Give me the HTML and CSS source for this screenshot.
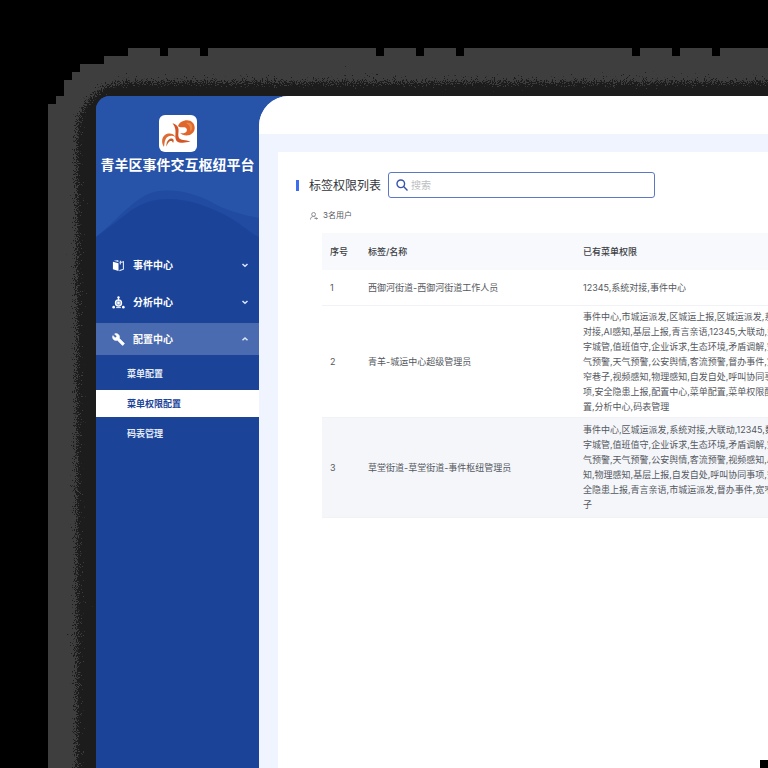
FILE: index.html
```html
<!DOCTYPE html>
<html lang="zh-CN">
<head>
<meta charset="utf-8">
<meta name="viewport" content="width=device-width, initial-scale=1">
<title>青羊区事件交互枢纽平台</title>
<link rel="stylesheet" href="styles.css">
</head>
<body>
<svg class="backdrop" aria-hidden="true">
  <defs>
    <filter id="grain" filterUnits="userSpaceOnUse" x="60" y="64" width="3000" height="3000" color-interpolation-filters="sRGB">
      <feGaussianBlur in="SourceAlpha" stdDeviation="7" result="soft"/>
      <feTurbulence type="fractalNoise" baseFrequency="0.9" numOctaves="2" seed="4"/>
      <feColorMatrix values="0 0 0 0 0  0 0 0 0 0  0 0 0 0 0  1 0 0 0 0" result="noise"/>
      <feComposite in="soft" in2="noise" operator="arithmetic" k2="1.3" k3="1.700" k4="-1"/>
      <feComponentTransfer result="dots"><feFuncA type="linear" slope="12" intercept="-5.5"/></feComponentTransfer>
      <feFlood flood-color="#1c1c1c"/>
      <feComposite in2="dots" operator="in"/>
    </filter>
  </defs>
  <path fill="#3e3e3e" d="M48 3000V104h8V96h8V80h8V72h8V64h24V56h24V48h32v8h8v-8h32v8h8v-8h168v8h8v-8h32v8h8v-8h32v8h8v-8h168v8h8v-8h32v8h8v-8h32v8h8v-8h2280v2952z"/>
  <rect x="77" y="82" width="3100" height="3100" rx="50" filter="url(#grain)"/>
</svg>
<div class="stage">
  <div class="window">
    <aside class="sidebar">
      <svg class="waves" viewBox="0 0 163 60" preserveAspectRatio="none" aria-hidden="true">
        <path fill="#204ba1" d="M0 51C14 41 30 20 50 9c16-8 44-5 67 8 17 9 31 12 46 15v28H0z"/>
        <path fill="#1b4499" d="M0 51C12 42 20 36 33 26c12-9 24-13 39-13 22 0 42 8 61 18 12 7 20 15 30 20v9H0z"/>
      </svg>
      <div class="brand">
        <svg class="logo" viewBox="0 0 38 37" role="img" aria-label="平台标志">
          <rect width="38" height="37" rx="6" fill="#fff"/>
          <path fill="#dc6c34" d="M5 32C1.500 27 3 20 9 18.600c3-.6 6 .4 7.500 3.400-3.500-2-7.500-1.500-9.500 1.500-1.600 2.500-1.500 5.500-2 8.500z"/>
          <path fill="#c85a28" d="M7.500 31.500c-.5-4 1.500-7.500 4.500-8 2.500-.3 3.500 2 2 4.500-.5-2-2-2.500-3.500-1.500s-2.300 3-3 5z"/>
          <path fill="#d35426" d="M13.500 8.300c3 .7 5.500 2.500 6 5.700.4 3-1 6.500.5 9 1.600 2.600 6.500 1.500 11.500 3.600-4 .9-6 1.300-9.500 1.100-5-.3-6-3.700-5.600-7.700.4-4.500.1-8-2.900-11.700z"/>
          <path fill="#e0662c" d="M19 11c1.300-3.500 5-5.700 9-5.700 4.500 0 7.700 3.200 7.700 7.500 0 4.700-3.600 7.700-8.200 7.700-2.700 0-5-1-6.500-2.500 3 .7 5.500.2 6.500-1.500 1.200-2-.2-3.800-2-4.200-2.300-.5-4.500.7-6.500-1.300z"/>
          <path fill="#e88a48" d="M27 8c4-1.200 6.300.9 6.300 4.500 0 2-1 3.300-2.300 4 .8-4-.8-7-4-8.500z"/>
        </svg>
        <h1 class="brand-name">青羊区事件交互枢纽平台</h1>
      </div>
      <nav class="menu">
        <button class="menu-item" type="button">
          <svg class="menu-icon" viewBox="0 0 14 14" aria-hidden="true"><path fill="#fff" d="M1 3l6 1.500v8.500l-6-2z"/><path fill="#c8d6f2" d="M2 2l4-1 1 .5v2z"/><path fill="none" stroke="#dce6fa" stroke-width="1.200" d="M8 4l4.300-1v8L8 12.500M9 2v4"/></svg>
          <span>事件中心</span>
          <svg class="chevron" viewBox="0 0 8 8" aria-hidden="true"><path d="M1.500 3L4 5.300 6.500 3"/></svg>
        </button>
        <button class="menu-item" type="button">
          <svg class="menu-icon" viewBox="0 0 14 14" aria-hidden="true"><circle cx="7" cy="7.500" r="3.300" fill="#8fabe0" stroke="#fff" stroke-width="1.300"/><circle cx="7" cy="7.500" r="1.300" fill="#fff"/><circle cx="7" cy="1.700" r="1.300" fill="#fff"/><circle cx="1.800" cy="12" r="1.400" fill="#fff"/><circle cx="12.200" cy="12" r="1.400" fill="#fff"/><path stroke="#fff" fill="none" d="M7 2v3M4.500 12.500h5"/></svg>
          <span>分析中心</span>
          <svg class="chevron" viewBox="0 0 8 8" aria-hidden="true"><path d="M1.500 3L4 5.300 6.500 3"/></svg>
        </button>
        <button class="menu-item is-open" type="button" aria-expanded="true">
          <svg class="menu-icon" viewBox="0 0 24 24" aria-hidden="true"><path fill="#fff" stroke="#fff" d="M22.700 19l-9.100-9.100c.9-2.300.4-5-1.500-6.900-2-2-5-2.400-7.400-1.300L9 6 6 9 1.600 4.700C.4 7.100.9 10.100 2.900 12.100c1.900 1.900 4.600 2.400 6.900 1.500l9.100 9.100c.4.4 1 .4 1.400 0l2.300-2.300c.5-.4.5-1.100.1-1.400z"/></svg>
          <span>配置中心</span>
          <svg class="chevron" viewBox="0 0 8 8" aria-hidden="true"><path d="M1.500 5.300L4 3l2.500 2.300"/></svg>
        </button>
        <div class="submenu">
          <a href="#">菜单配置</a>
          <a href="#" class="is-current" aria-current="page">菜单权限配置</a>
          <a href="#">码表管理</a>
        </div>
      </nav>
    </aside>
    <main class="main">
      <header class="topbar"></header>
      <section class="panel">
        <div class="panel-head">
          <h2>标签权限列表</h2>
          <label class="search">
            <svg viewBox="0 0 12 12" aria-hidden="true"><circle cx="4.800" cy="4.800" r="3.800"/><path d="M7.600 7.600l3.900 3.900"/></svg>
            <input type="search" placeholder="搜索" aria-label="搜索">
          </label>
        </div>
        <p class="count">
          <svg viewBox="0 0 8 8" aria-hidden="true"><circle cx="3.600" cy="2.400" r="1.900"/><path d="M.5 7.500c0-2 1.300-3 3-3 .8 0 1.500.2 2 .7M4.500 6.500h3M6.500 5.500l1 1-1 1"/></svg>
          3名用户
        </p>
        <table>
          <thead>
            <tr><th class="col-no">序号</th><th class="col-name">标签/名称</th><th>已有菜单权限</th></tr>
          </thead>
          <tbody>
            <tr><td>1</td><td>西御河街道-西御河街道工作人员</td><td>12345,系统对接,事件中心</td></tr>
            <tr class="tall"><td>2</td><td>青羊-城运中心超级管理员</td><td>事件中心,市城运派发,区城运上报,区城运派发,系统<br>对接,AI感知,基层上报,青言亲语,12345,大联动,数<br>字城管,值班值守,企业诉求,生态环境,矛盾调解,空<br>气预警,天气预警,公安舆情,客流预警,督办事件,宽<br>窄巷子,视频感知,物理感知,自发自处,呼叫协同事<br>项,安全隐患上报,配置中心,菜单配置,菜单权限配<br>置,分析中心,码表管理</td></tr>
            <tr class="shaded"><td>3</td><td>草堂街道-草堂街道-事件枢纽管理员</td><td>事件中心,区城运派发,系统对接,大联动,12345,数<br>字城管,值班值守,企业诉求,生态环境,矛盾调解,空<br>气预警,天气预警,公安舆情,客流预警,视频感知,AI感<br>知,物理感知,基层上报,自发自处,呼叫协同事项,安<br>全隐患上报,青言亲语,市城运派发,督办事件,宽窄巷<br>子</td></tr>
          </tbody>
        </table>
      </section>
    </main>
  </div>
</div>
<div class="corner-mark"></div>
</body>
</html>
```
FILE: styles.css
```css
* { box-sizing: border-box; }

body {
  margin: 0;
  background: #000;
  color: #55585e;
  font-family: Inter, "Noto Sans CJK SC", sans-serif;
  font-size: 9px;
  line-height: 15px;
  overflow: hidden;
}

h1, h2, p { margin: 0; }

button, input { font: inherit; color: inherit; }

.backdrop {
  position: absolute;
  inset: 0;
  width: 100%;
  height: 100%;
}

.stage {
  position: relative;
  display: flex;
  min-height: 100vh;
  padding: 96px 0 0 96px;
}

.window {
  display: flex;
  flex: 1;
  min-width: 0;
  overflow: hidden;
  border-radius: 14px 0 0 0;
  background: #2753a9;
}

.sidebar {
  position: relative;
  flex: 0 0 163px;
  background: linear-gradient(#2753a9 148px, #1b4499 148px);
  color: #fff;
}

.waves {
  position: absolute;
  top: 90px;
  left: 0;
  width: 100%;
  height: 60px;
}

.brand {
  display: flex;
  flex-direction: column;
  align-items: center;
  gap: 3px;
  padding-top: 19px;
}

.logo { width: 38px; height: 37px; }

.brand-name {
  font-size: 14px;
  line-height: 20px;
  font-weight: 700;
  white-space: nowrap;
}

.menu {
  position: relative;
  display: flex;
  flex-direction: column;
  gap: 5px;
  padding-top: 74px;
}

.menu-item {
  display: flex;
  align-items: center;
  gap: 8px;
  height: 32px;
  padding: 0 10px 0 16px;
  border: 0;
  background: none;
  font-size: 10px;
  font-weight: 700;
  text-align: left;
}

.menu-item span { flex: 1; }
.menu-item.is-open { background: #4b6bb0; }
.menu-icon { width: 13px; height: 13px; }

.chevron {
  width: 8px;
  height: 8px;
  fill: none;
  stroke: #dce6fa;
  stroke-width: 1.500px;
}

.submenu {
  display: flex;
  flex-direction: column;
  gap: 3px;
}

.submenu a {
  padding: 6px 31px;
  color: #e4ebf8;
  font-weight: 700;
  text-decoration: none;
}

.submenu a.is-current { background: #fff; color: #1b4499; }

.main {
  display: flex;
  flex: 1;
  flex-direction: column;
  min-width: 0;
  overflow: hidden;
  border-radius: 30px 0 0 0;
  background: #f0f4fe;
}

.topbar { height: 38px; background: #fff; }

.panel {
  flex: 1;
  margin: 18px 0 0 19px;
  padding: 20px 0 0 18px;
  background: #fff;
}

.panel-head {
  display: flex;
  align-items: center;
  gap: 7px;
}

h2 {
  display: flex;
  align-items: center;
  gap: 10px;
  color: #33363b;
  font-size: 12px;
  font-weight: 400;
}

h2::before {
  width: 3px;
  height: 11px;
  background: #3d6df0;
  content: "";
}

.search {
  display: flex;
  align-items: center;
  gap: 3px;
  width: 267px;
  height: 26px;
  padding: 0 7px;
  border: 1px solid #5b78c2;
  border-radius: 3px;
}

.search svg {
  width: 12px;
  height: 12px;
  fill: none;
  stroke: #3953ad;
  stroke-width: 1.400px;
}

.search input {
  flex: 1;
  min-width: 0;
  padding: 0;
  border: 0;
  outline: 0;
  background: none;
  font-size: 10px;
}

.search input::placeholder { color: #bcbec2; }

.count {
  display: flex;
  align-items: center;
  gap: 5px;
  padding: 10px 0 10px 14px;
  font-size: 8px;
}

.count svg {
  width: 8px;
  height: 8px;
  fill: none;
  stroke: #8b8e94;
  stroke-width: 1px;
}

table {
  width: 660px;
  margin-left: 26px;
  border-collapse: collapse;
  table-layout: fixed;
  white-space: nowrap;
}

th, td {
  padding: 3px 8px;
  text-align: left;
  vertical-align: middle;
}

th {
  height: 37px;
  background: #f8f9fc;
  color: #3c3f45;
  font-weight: 500;
}

.col-no { width: 38px; }
.col-name { width: 215px; }

td { height: 35px; border-bottom: 1px solid #f1f2f6; }
.tall td { height: 112px; }
.shaded td { height: 100px; background: #f4f6fa; }

.corner-mark {
  position: fixed;
  right: 0;
  bottom: 0;
  width: 8px;
  height: 8px;
  background: #000;
}
```
